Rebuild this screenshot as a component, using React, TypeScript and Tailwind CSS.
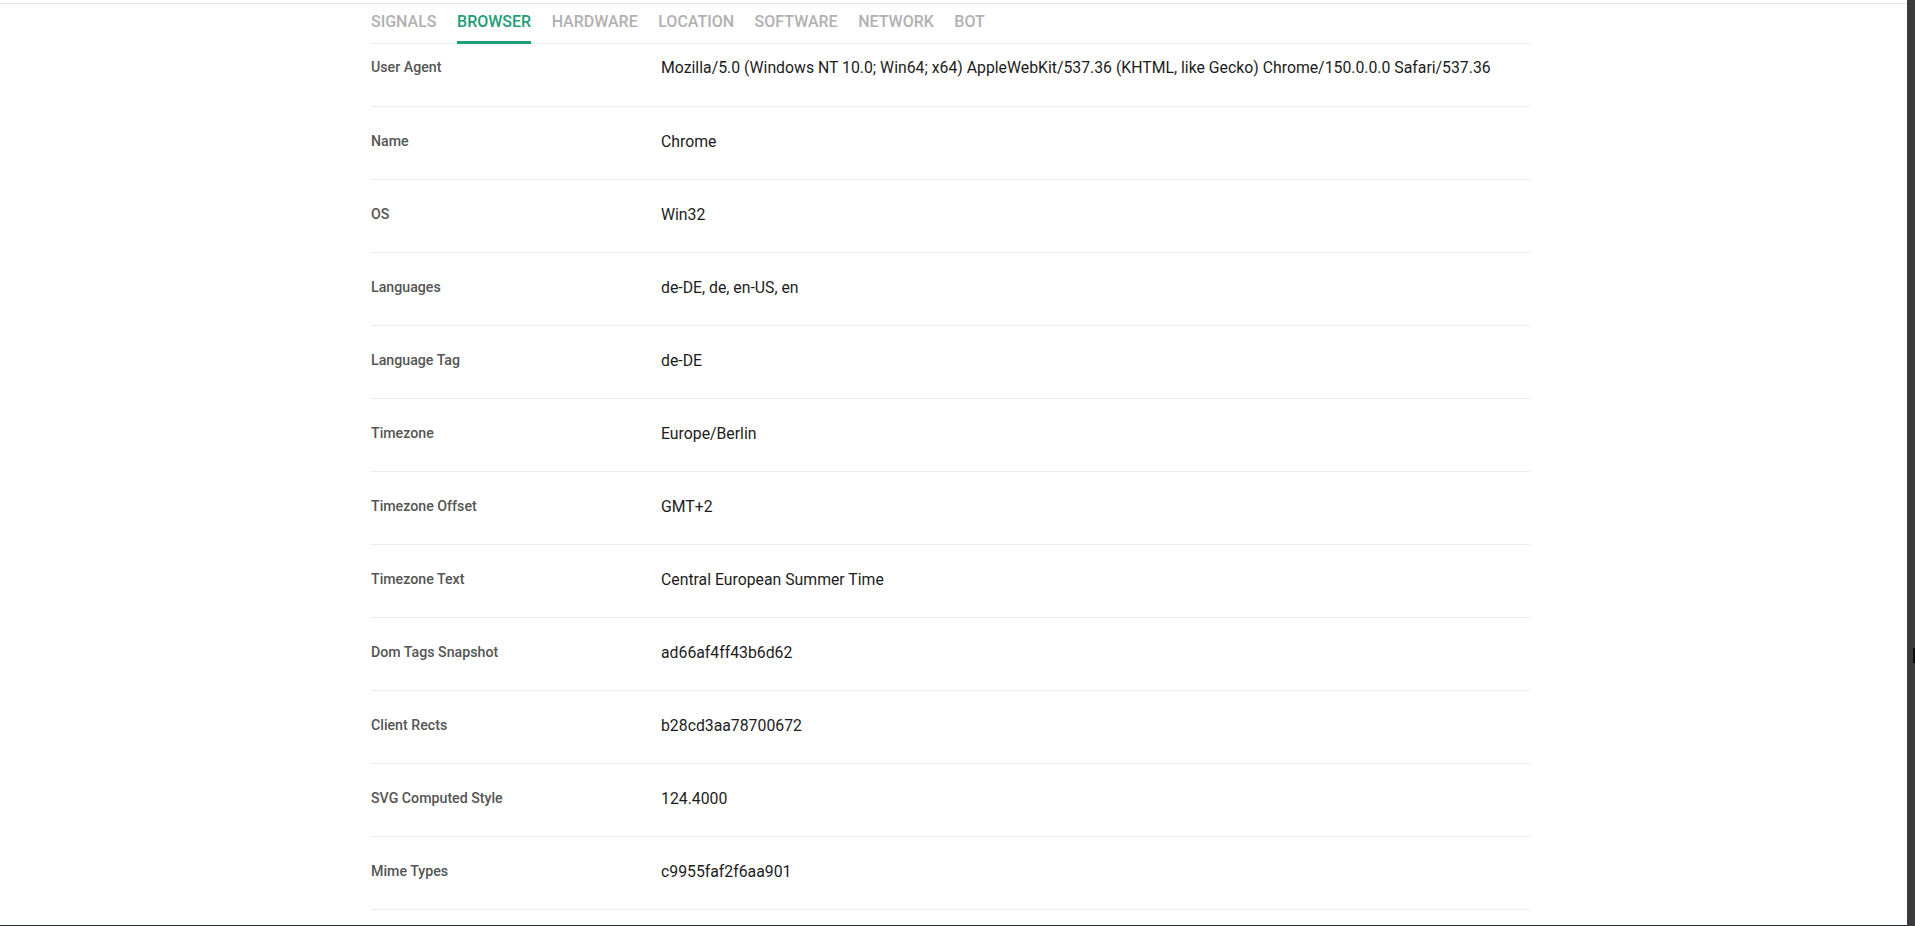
import React from "react";

const tabs = ["SIGNALS", "BROWSER", "HARDWARE", "LOCATION", "SOFTWARE", "NETWORK", "BOT"];

const rows: [string, string][] = [
  ["User Agent", "Mozilla/5.0 (Windows NT 10.0; Win64; x64) AppleWebKit/537.36 (KHTML, like Gecko) Chrome/150.0.0.0 Safari/537.36"],
  ["Name", "Chrome"],
  ["OS", "Win32"],
  ["Languages", "de-DE, de, en-US, en"],
  ["Language Tag", "de-DE"],
  ["Timezone", "Europe/Berlin"],
  ["Timezone Offset", "GMT+2"],
  ["Timezone Text", "Central European Summer Time"],
  ["Dom Tags Snapshot", "ad66af4ff43b6d62"],
  ["Client Rects", "b28cd3aa78700672"],
  ["SVG Computed Style", "124.4000"],
  ["Mime Types", "c9955faf2f6aa901"],
];

export default function App() {
  return (
    <div
      className="w-[1915px] h-[926px] flex overflow-hidden bg-white"
      style={{ fontFamily: "Roboto, 'Liberation Sans', sans-serif" }}
    >
      <div className="flex-1 flex flex-col">
        <div className="flex-1 flex flex-col">
          <div className="h-[3px]" />
          <div className="h-px bg-[#e2e2e2]" />
          <div className="pl-[371px]">
            <div className="w-[1159px]">
              <div className="flex gap-[20.5px] border-b border-[#ececec] h-[40px]">
                {tabs.map((t) => {
                  const active = t === "BROWSER";
                  return (
                    <div
                      key={t}
                      className={
                        "pt-[8px] text-[16px] leading-[20px] font-medium border-b-[3px] -mb-px " +
                        (active ? "text-[#1f9d78] border-[#1f9d78]" : "text-[#b1b1b1] border-transparent")
                      }
                    >
                      {t}
                    </div>
                  );
                })}
              </div>
              {rows.map(([label, value], i) => (
                <div
                  key={label}
                  className={
                    "grid grid-cols-[290px_1fr] border-b border-[#ececec] " +
                    (i === 0 ? "h-[63px] pt-[13px]" : "h-[73px] pt-[24px]")
                  }
                >
                  <div className="text-[14.2px] leading-[20px] font-medium text-[#555555]">{label}</div>
                  <div className="text-[15.8px] leading-[22px] text-[#1c1c1c]">{value}</div>
                </div>
              ))}
            </div>
          </div>
        </div>
        <div className="h-px bg-[#2b3333]" />
      </div>
      <div className="w-[8px] bg-[#3b3b3d] flex flex-col">
        <div className="h-[648px]" />
        <div className="ml-[6px] w-[2px] h-[15px] bg-[#0c0c0c]" />
      </div>
    </div>
  );
}
